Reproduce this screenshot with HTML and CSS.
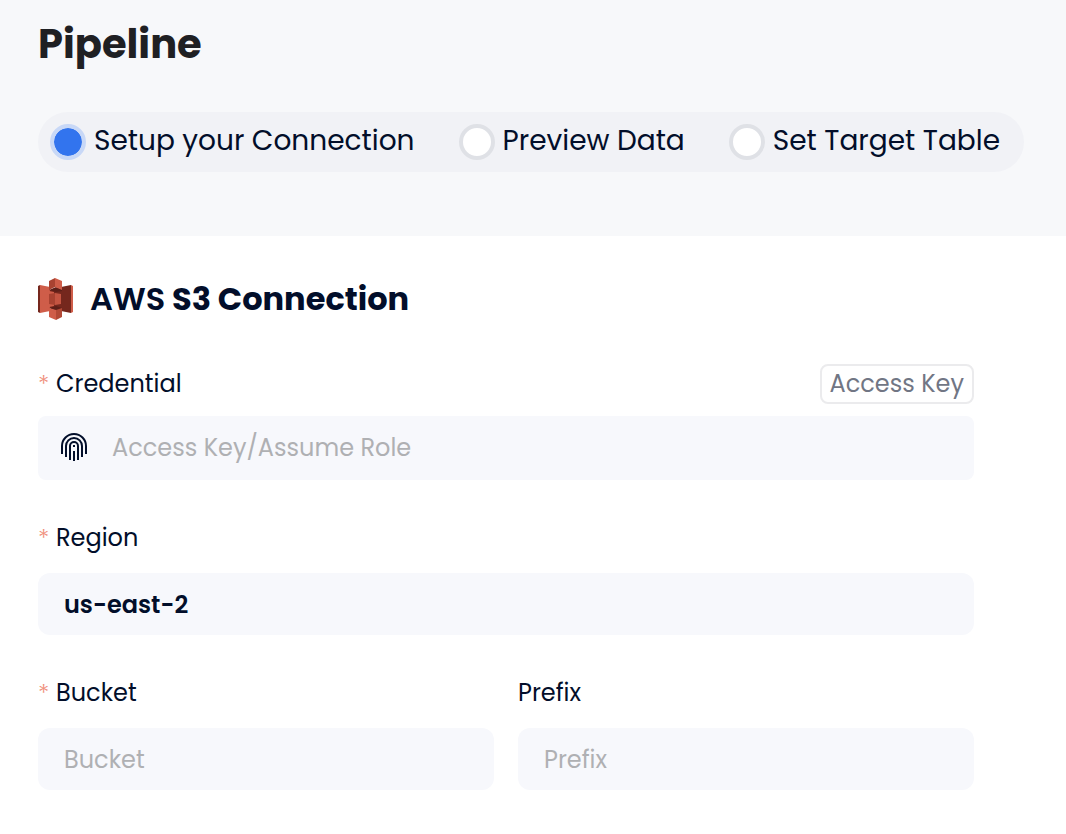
FILE: index.html
```html
<!DOCTYPE html>
<html lang="en">
<head>
<meta charset="utf-8">
<meta name="viewport" content="width=device-width, initial-scale=1">
<title>Pipeline</title>
<link rel="stylesheet" href="styles.css">
</head>
<body>
<header class="header">
  <h1 class="title">Pipeline</h1>
  <div class="steps" role="radiogroup" aria-label="Pipeline steps">
    <label class="step"><input class="dot" type="radio" name="step" checked><span class="step-name">Setup your Connection</span></label>
    <label class="step"><input class="dot" type="radio" name="step"><span class="step-name">Preview Data</span></label>
    <label class="step"><input class="dot" type="radio" name="step"><span class="step-name">Set Target Table</span></label>
  </div>
</header>
<main class="content">
  <h2 class="heading">
    <svg class="logo" viewBox="0 0 36 42" aria-hidden="true">
      <path fill="#75271d" d="M0 8l2-1v28l-2-1z"/>
      <path fill="#cf5d49" d="M2 7l10 2v24L2 35z"/>
      <path fill="#cf5d49" d="M33 7l2 1v26l-2 1z"/>
      <path fill="#75271d" d="M33 7l-10 2v24l10 2z"/>
      <path fill="#75271d" d="M12 12l12-1v20l-12-1z"/>
      <path fill="#cf5d49" d="M11 13l5 1v14l-5 1z"/>
      <path fill="#a94231" d="M11 16l6-1v12l-6-1z"/>
      <path fill="#c45441" d="M17 15l6 1v10l-6 1z"/>
      <path fill="#5e1f18" d="M11 12l7-3 6 2v2l-6 1zM11 30l7-2 6 2v1l-6 2z"/>
      <path fill="#a94231" d="M11 3l6-3v9l-6 3z"/>
      <path fill="#cf5d49" d="M17 0l7 3v9l-7-3z"/>
      <path fill="#cf5d49" d="M11 30l7 2v10l-7-3z"/>
      <path fill="#b24936" d="M18 32l6-2v9l-6 3z"/>
    </svg>
    <span><span class="vendor">AWS</span> S3 Connection</span>
  </h2>
  <form class="form">
    <div class="field">
      <div class="label-row">
        <label class="label required" for="credential">Credential</label>
        <button class="tag" type="button">Access Key</button>
      </div>
      <div class="input-box">
        <svg class="fingerprint" viewBox="0 0 28 29" aria-hidden="true">
          <path d="M2 21V13a12 12 0 0 1 24 0v8M6 24V13a8 8 0 0 1 16 0v11M10 27V13a4 4 0 0 1 8 0v14M14 18v10M14 12v2"/>
        </svg>
        <input class="bare" id="credential" type="text" placeholder="Access Key/Assume Role">
      </div>
    </div>
    <div class="field">
      <label class="label required" for="region">Region</label>
      <input class="input" id="region" type="text" value="us-east-2">
    </div>
    <div class="pair">
      <div class="field">
        <label class="label required" for="bucket">Bucket</label>
        <input class="input" id="bucket" type="text" placeholder="Bucket">
      </div>
      <div class="field">
        <label class="label" for="prefix">Prefix</label>
        <input class="input" id="prefix" type="text" placeholder="Prefix">
      </div>
    </div>
  </form>
</main>
</body>
</html>
```
FILE: styles.css
```css
* { box-sizing: border-box; }

body {
  margin: 0;
  background: #fff;
  color: #020e2a;
  font-family: Poppins, Inter, sans-serif;
  font-size: 24px;
}

input, button { font: inherit; color: inherit; }

.header {
  padding: 16px 42px 64px 38px;
  background: #f7f8fa;
}

.title {
  margin: 0 0 40px;
  color: #1f2023;
  font-size: 40px;
  line-height: 56px;
  font-weight: 700;
}

.steps {
  display: flex;
  justify-content: space-between;
  padding: 12px 24px 12px 12px;
  border-radius: 30px;
  background: #f1f2f6;
}

.step {
  display: flex;
  align-items: center;
  gap: 8px;
  font-size: 28px;
  line-height: 32px;
  white-space: nowrap;
}

.step-name { padding-bottom: 2px; }

.dot {
  appearance: none;
  flex: none;
  width: 36px;
  height: 36px;
  margin: 0;
  border: 4px solid #dfe1e6;
  border-radius: 50%;
  background: #fff;
}

.dot:checked {
  border-color: #c8d8f7;
  background: #3274ee;
  background-clip: padding-box;
}

.content { padding: 40px 92px 40px 38px; }

.heading {
  display: flex;
  align-items: center;
  gap: 16px;
  margin: 0 0 42px;
  font-size: 32px;
  line-height: 46px;
  font-weight: 700;
}

.vendor { font-weight: 600; }

.logo { width: 36px; height: 42px; }

.form {
  display: flex;
  flex-direction: column;
  gap: 38px;
}

.field {
  display: flex;
  flex-direction: column;
  gap: 15px;
}

.field:has(.label-row) { gap: 12px; }

.label-row {
  display: flex;
  align-items: center;
  justify-content: space-between;
}

.label {
  display: flex;
  height: 40px;
  line-height: 40px;
}

.required::before {
  content: "*";
  width: 18px;
  color: #f0907c;
  font-weight: 300;
}

.tag {
  height: 40px;
  padding: 0 8px;
  border: 2px solid #ebebed;
  border-radius: 8px;
  background: #fff;
  color: #717684;
  line-height: 36px;
}

.input-box {
  display: flex;
  align-items: center;
  gap: 24px;
  height: 64px;
  padding: 0 22px 2px;
  border-radius: 8px;
  background: #f7f8fc;
}

.fingerprint {
  width: 28px;
  height: 29px;
  fill: none;
  stroke: #020e2a;
  stroke-width: 2;
}

.bare {
  flex: 1;
  min-width: 0;
  padding: 0;
  border: 0;
  background: none;
}

.input {
  width: 100%;
  height: 62px;
  padding: 0 26px;
  border: 0;
  border-radius: 12px;
  background: #f7f8fc;
  font-weight: 600;
}

::placeholder {
  color: #afb0b3;
  font-weight: 400;
  opacity: 1;
}

.pair {
  display: grid;
  grid-template-columns: 1fr 1fr;
  gap: 24px;
}
```
